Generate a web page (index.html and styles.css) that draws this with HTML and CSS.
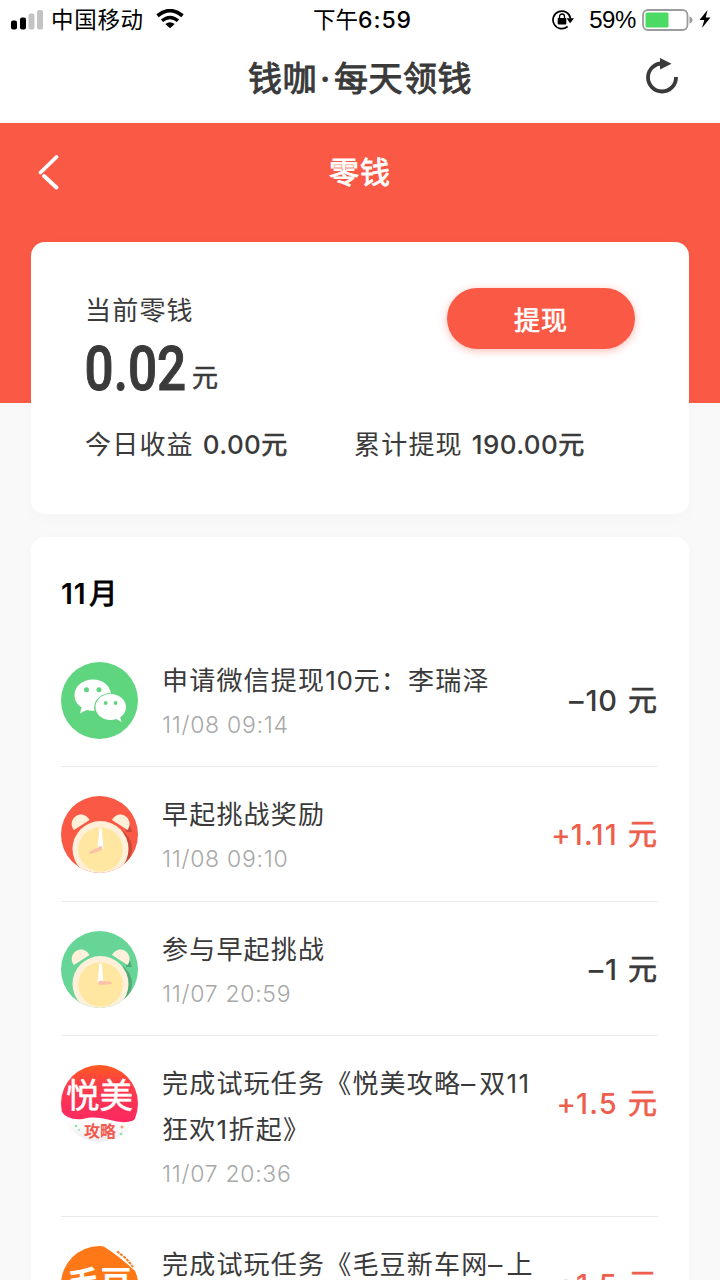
FILE: index.html
```html
<!DOCTYPE html>
<html lang="zh-CN">
<head>
<meta charset="utf-8">
<title>零钱</title>
<link rel="stylesheet" href="styles.css">
</head>
<body>
<div class="screen">
  <header class="status">
    <div class="status-left">
      <svg class="signal" width="32" height="20" viewBox="0 0 32 20"><rect x="0" y="10.500" width="6" height="9" rx="2"/><rect x="9" y="7.500" width="6" height="12" rx="2"/><rect x="17.500" y="3.500" width="6" height="16" rx="2" fill="#c3c3c3"/><rect x="26" y="0" width="6" height="19.500" rx="2" fill="#c3c3c3"/></svg>
      <span class="carrier">中国移动</span>
      <svg class="wifi" width="28" height="20" viewBox="0 0 28 20" fill="none" stroke="#000"><path d="M1.500 6.800Q14-3.500 26.500 6.800" stroke-width="3.700"/><path d="M6 11.800Q14 5 22 11.800" stroke-width="3.400"/><path d="M9.300 14.900Q14 11.500 18.700 14.900L14 19.300Z" fill="#000" stroke="none"/></svg>
    </div>
    <div class="clock">下午<b>6:59</b></div>
    <div class="status-right">
      <svg class="lock" width="23" height="20" viewBox="0 0 23 20"><path d="M15.600 16.500A8.800 8.800 0 1 1 18.500 8.500" fill="none" stroke="#000" stroke-width="1.700"/><path d="M14.500 8.300h7.500l-3.800 4.900z"/><rect x="5.700" y="8" width="8.600" height="6.500" rx=".8"/><path d="M7.500 9V6.500a2.500 2.500 0 0 1 5 0V9" fill="none" stroke="#000" stroke-width="1.300"/></svg>
      <span class="percent">59%</span>
      <svg class="battery" width="52" height="22" viewBox="0 0 52 22"><rect x="1" y="1" width="44.500" height="20" rx="5" fill="#fff" stroke="#9b9b9b" stroke-width="1.800"/><rect x="3.500" y="3.500" width="23" height="15" rx="1.500" fill="#4cd964"/><path d="M47.500 7.500q3 1 3 3.500t-3 3.500z" fill="#9b9b9b"/></svg>
      <svg class="bolt" width="12" height="18" viewBox="0 0 12 18"><path d="M8.500 0 .5 10h4.800L3 18l8.500-10.500H6.700z"/></svg>
    </div>
  </header>
  <div class="titlebar">
    <h1>钱咖<i>·</i>每天领钱</h1>
    <svg class="refresh" width="34" height="36" viewBox="0 0 34 36"><path d="M17.500 5.500A14 14 0 1 0 31 19" fill="none" stroke="#3a3a3a" stroke-width="3.800"/><path d="M15 0 26.500 5.700 15 11.500z" fill="#3a3a3a"/></svg>
  </div>
  <section class="hero">
    <svg class="back" width="22" height="36" viewBox="0 0 22 36" fill="none" stroke="#fff" stroke-width="3.800" stroke-linecap="round"><path d="M18.500 2 2.500 17.500M6 21 18.500 32.500"/></svg>
    <h2>零钱</h2>
  </section>
  <main>
    <section class="card balance">
      <div class="balance-top">
        <div>
          <div class="label">当前零钱</div>
          <div class="money"><svg class="big" width="102" height="50" viewBox="0 0 102 50"><text x="-.5" y="46.500" transform="scale(.84 1)">0.02</text></svg><span class="unit">元</span></div>
        </div>
        <button class="withdraw">提现</button>
      </div>
      <div class="stats">
        <div class="stat">今日收益<strong>0.00<em>元</em></strong></div>
        <div class="stat">累计提现<strong>190.00<em>元</em></strong></div>
      </div>
    </section>
    <section class="card history">
      <h3>11<span>月</span></h3>
      <article class="row">
        <svg class="icon" viewBox="0 0 77 77"><circle cx="38.500" cy="38.500" r="38.500" fill="#5fd580"/><path fill="#fff" d="M32 17.500c-10.500 0-18.500 6.800-18.500 15.800 0 5 2.700 9.300 7.200 12.200l-1.900 6 6.800-3.500c2.500.7 5 1 8 .7-2.200-10.200 6.500-17.800 16.300-17.500C48.500 23 41.500 17.500 32 17.500z"/><path fill="#fff" d="M49.500 32C41 32 34.500 37.700 34.500 45s6.500 13 15 13c2 0 4-.3 5.800-.9l5.300 3-1.400-4.800C62.700 53 65 49.500 65 45c0-7.300-7-13-15.500-13z"/><g fill="#5fd580"><circle cx="25.500" cy="27.700" r="2.500"/><circle cx="38" cy="27.700" r="2.500"/><circle cx="44.700" cy="41" r="1.900"/><circle cx="54.500" cy="41" r="1.900"/></g></svg>
        <div class="detail"><div class="name">申请微信提现<span class="n ten">10</span>元：李瑞泽</div><time>11/08 09:14</time></div>
        <div class="amount"><b><u>–</u>10</b>元</div>
      </article>
      <article class="row">
        <svg class="icon" viewBox="0 0 77 77"><defs><clipPath id="disc"><circle cx="38.500" cy="38.500" r="38.500"/></clipPath><g id="clock"><path d="M67 23 71 36 65 36zM62 35Q77 48 67 66L55 72z" fill="#000" opacity=".2"/><path d="M13 34C7.500 27 13 18.500 20 18.500c4 0 7 2.500 8.500 5.500zM66.500 34C72 27 66 18.500 59.500 18.500c-4 0-7 2.500-8.500 5.500z" fill="#fff0d9"/><circle cx="39.500" cy="53" r="28" fill="#fff0d9"/><circle cx="39.500" cy="53.500" r="22.300" fill="#ffe7a2"/></g></defs><g clip-path="url(#disc)"><path fill="#fa5946" d="M0 0h77v77H0z"/><use href="#clock"/></g><path d="M36.500 53 38.300 33q1.200-2 2.400 0L42.500 53z" fill="#fff"/><path d="M39.500 50 29 55.500q-2 3 1 2.500l10-3.500q3-4-.5-4.500z" fill="#fac3a5"/></svg>
        <div class="detail"><div class="name">早起挑战奖励</div><time>11/08 09:10</time></div>
        <div class="amount plus"><b><u>+</u>1.11</b>元</div>
      </article>
      <article class="row">
        <svg class="icon" viewBox="0 0 77 77"><g clip-path="url(#disc)"><path fill="#66d596" d="M0 0h77v77H0z"/><use href="#clock"/></g><path d="M36.500 52 38.300 33q1.200-2 2.400 0L42.500 52z" fill="#fff"/><path d="M39 49.700 49.500 50.500q3 1.500 0 2.800L39 54q-4-2.200 0-4.300z" fill="#fac3a5"/></svg>
        <div class="detail"><div class="name">参与早起挑战</div><time>11/07 20:59</time></div>
        <div class="amount"><b><u>–</u>1</b>元</div>
      </article>
      <article class="row">
        <svg class="icon" viewBox="0 0 77 77"><defs><linearGradient id="pink" x1="0" y1="0" x2="0" y2="1"><stop offset="0" stop-color="#ff5a1f"/><stop offset=".35" stop-color="#fc3d4a"/><stop offset="1" stop-color="#fb2862"/></linearGradient><linearGradient id="pale" x1="0" y1="0" x2="0" y2="1"><stop offset=".7" stop-color="#fff"/><stop offset="1" stop-color="#eeeef1"/></linearGradient></defs><g clip-path="url(#disc)"><path fill="url(#pale)" d="M0 0h77v77H0z"/><path d="M0 0h77v52Q72 58 60 57C46 55 36 50 22 54Q7 56 0 46z" fill="url(#pink)"/></g><text class="logo-main" x="5" y="43" textLength="67" lengthAdjust="spacingAndGlyphs">悦美</text><text class="logo-sub" x="23" y="71.500" textLength="32">攻略</text><g fill="#8be3ad"><circle cx="15" cy="61" r="1.300"/><circle cx="18" cy="65" r="1"/><circle cx="60" cy="69" r="1.300"/></g><circle cx="61" cy="62" r="1.500" fill="#ffa16b"/></svg>
        <div class="detail"><div class="name">完成试玩任务《悦美攻略<span class="dash">–</span>双<span class="n">11</span><br>狂欢<span class="n one">1</span>折起》</div><time>11/07 20:36</time></div>
        <div class="amount plus"><b><u>+</u>1.5</b>元</div>
      </article>
      <article class="row">
        <svg class="icon" viewBox="0 0 77 77"><g clip-path="url(#disc)"><path fill="#fff" d="M0 0h77v77H0z"/><path d="M0 0h42Q58 10 74 25L77 32v45H0z" fill="#ff7817"/></g><path d="M56 5.500Q65 11 72 21" fill="none" stroke="#ff7817" stroke-width="2" stroke-dasharray="3 1"/><text class="logo-orange" x="7" y="48" textLength="64" lengthAdjust="spacingAndGlyphs">毛豆</text></svg>
        <div class="detail"><div class="name">完成试玩任务《毛豆新车网<span class="dash">–</span>上</div></div>
        <div class="amount plus"><b><u>+</u>1.5</b>元</div>
      </article>
    </section>
  </main>
</div>
</body>
</html>
```
FILE: styles.css
```css
* { box-sizing: border-box; }
body { margin: 0; color: #3a3a3a; background: #f9f9f9; font-family: Inter, "Noto Sans CJK SC", sans-serif; }
h1, h2, h3 { margin: 0; }
i, em { font-style: normal; }
u { text-decoration: none; }
svg { display: block; flex: none; }
.screen { width: 720px; height: 1280px; overflow: hidden; background: #f9f9f9; }

.status { height: 40px; background: #fff; display: grid; grid-template-columns: 1fr auto 1fr; align-items: center; padding: 0 9px 0 11px; color: #000; font-size: 22.500px; line-height: 40px; }
.status-left, .status-right { display: flex; align-items: center; }
.status-right { justify-content: flex-end; }
.signal { margin-top: -1px; }
.carrier { margin-left: 8px; letter-spacing: .7px; }
.wifi { margin-left: 12px; margin-top: -2px; }
.clock { padding-left: 3px; margin-top: -1px; }
.clock b { font-weight: 500; font-size: 23px; letter-spacing: 1px; }
.lock { margin-top: -1px; }
.percent { margin: -1px 6px 0 14px; font: 24px/40px "Liberation Sans", sans-serif; letter-spacing: -.4px; }
.battery { margin-top: -1px; }
.bolt { margin-left: 5px; margin-top: -2px; }

.titlebar { height: 83px; padding: 0 41px 9px 248px; background: #fff; display: flex; align-items: center; justify-content: space-between; }
.refresh { margin-top: -2px; }
h1 { padding-top: 3px; font-size: 34px; line-height: 60px; font-weight: 400; letter-spacing: .5px; white-space: nowrap; -webkit-text-stroke: 1px #3a3a3a; }
h1 i { display: inline-block; width: 17px; text-align: center; }

.hero { height: 280px; padding: 28px 38px; background: #fa5946; display: grid; grid-template-columns: 22px 1fr 22px; align-items: start; }
.back { margin-top: 4px; }
h2 { color: #fff; text-align: center; font-size: 30px; line-height: 42px; font-weight: 400; letter-spacing: 1px; -webkit-text-stroke: .8px #fff; }

main { padding: 0 31px; margin-top: -161px; }
.card { position: relative; background: #fff; border-radius: 14px; box-shadow: 0 4px 16px rgba(0,0,0,.025); }
.balance { height: 272px; padding: 46px 54px 0; }
.balance-top { display: flex; justify-content: space-between; height: 136px; }
.label { padding-top: 2px; font-size: 26px; line-height: 42px; letter-spacing: 1.200px; }
.money { display: flex; align-items: flex-end; gap: 5px; margin-top: 11px; }
.big { font: 500 61px Roboto, sans-serif; fill: #3a3a3a; stroke: #3a3a3a; stroke-width: 1px; overflow: visible; }
.unit { font-size: 26px; line-height: 30px; -webkit-text-stroke: .5px #3a3a3a; }
.withdraw { width: 188px; height: 61px; border: 0; padding: 0; border-radius: 31px; color: #fff; background: #fa5946; box-shadow: 0 2px 9px rgba(250,89,70,.4); font: 400 26px/59px "Noto Sans CJK SC", sans-serif; letter-spacing: 1px; -webkit-text-stroke: .7px #fff; }
.stats { display: grid; grid-template-columns: 269px 1fr; font-size: 26px; line-height: 42px; letter-spacing: 1.200px; }
.stat { white-space: nowrap; }
.stat strong { margin-left: 9px; font-weight: 500; letter-spacing: .4px; }
.stat em { font-weight: 400; -webkit-text-stroke: .7px #3a3a3a; }

.history { margin-top: 23px; height: 800px; padding: 37px 31px 0 30px; }
h3 { height: 59px; line-height: 40px; font-size: 28px; font-weight: 600; color: #000; letter-spacing: .8px; }
h3 span { margin-left: 3px; font-weight: 400; -webkit-text-stroke: 1px #000; }
.row { display: grid; grid-template-columns: 77px 1fr auto; column-gap: 24px; align-items: start; padding: 24px 1px 18px 0; border-bottom: 1px solid #ebebeb; }
.icon { width: 77px; height: 77px; margin-top: 5px; }
.detail { min-width: 0; margin-right: -40px; }
.name { padding-top: 1px; font-size: 26px; line-height: 46px; letter-spacing: 1.200px; white-space: nowrap; }
.n { letter-spacing: 1.500px; }
.ten { letter-spacing: .7px; }
.dash { display: inline-block; width: 14px; margin-right: 4px; transform: scaleX(1.1); transform-origin: left; letter-spacing: 0; }
time { display: block; height: 44.400px; line-height: 42px; color: #a8a8a8; font-size: 23px; font-weight: 300; letter-spacing: .7px; }
.amount { padding-top: 1px; line-height: 85px; font-size: 29px; white-space: nowrap; -webkit-text-stroke: .7px currentColor; }
.amount b { font-weight: 500; margin-right: 10px; letter-spacing: .9px; -webkit-text-stroke: 0; }
.amount u { margin-right: 1px; }
.plus { color: #ee5e4c; }
.plus u { margin-right: -1px; }
.plus b { letter-spacing: 1.200px; }
.logo-main { font: 400 34px "Noto Sans CJK SC", sans-serif; fill: #fff; stroke: #fff; stroke-width: .5px; }
.logo-sub { font: 700 16px "Noto Sans CJK SC", sans-serif; fill: #f15a4c; }
.logo-orange { font: 700 32px "Noto Sans CJK SC", sans-serif; fill: #fff; }
```
